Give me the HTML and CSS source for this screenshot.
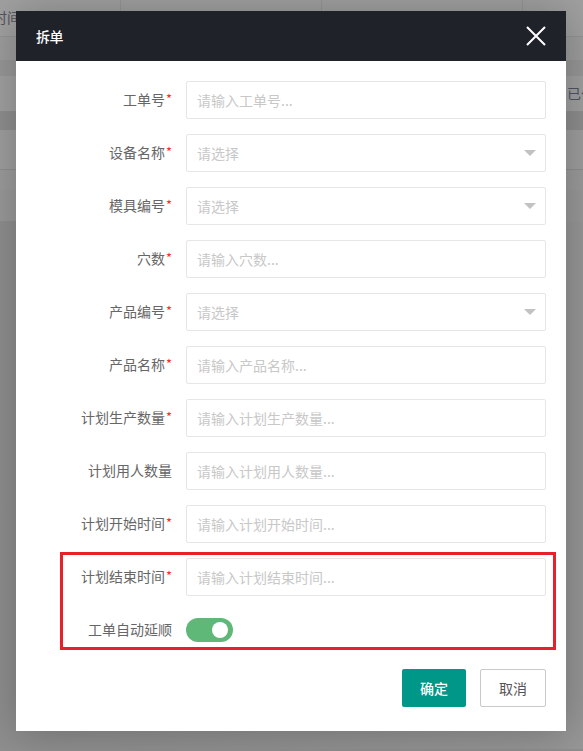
FILE: index.html
```html
<!DOCTYPE html>
<html lang="zh-CN">
<head>
<meta charset="utf-8">
<title>拆单</title>
<link rel="stylesheet" href="styles.css">
</head>
<body>
<div class="page">
  <div class="bg">
    <div class="bg-row r-head">
      <div class="bg-cell c1"><span class="bg-text">时间</span></div>
      <div class="bg-cell c2"></div>
      <div class="bg-cell c3"></div>
      <div class="bg-cell c4"></div>
    </div>
    <div class="bg-row r-a"></div>
    <div class="bg-row r-b"></div>
    <div class="bg-row r-c"><span class="bg-text right">已付</span></div>
    <div class="bg-row r-d"></div>
    <div class="bg-row r-e"></div>
    <div class="bg-row r-f"></div>
    <div class="bg-row r-g"></div>
    <div class="bg-row r-h"></div>
  </div>

  <div class="dialog">
    <div class="dlg-head">
      <span class="dlg-title">拆单</span>
      <svg class="dlg-close" width="20" height="20" viewBox="0 0 20 20"><path d="M1 1 L19 19 M19 1 L1 19" stroke="#ffffff" stroke-width="2" fill="none"/></svg>
    </div>
    <div class="dlg-body">
      <div class="form-row">
        <label class="lbl">工单号<i class="req">*</i></label>
        <div class="field"><input class="inp" placeholder="请输入工单号..."></div>
      </div>
      <div class="form-row">
        <label class="lbl">设备名称<i class="req">*</i></label>
        <div class="field"><input class="inp" placeholder="请选择"><span class="caret"></span></div>
      </div>
      <div class="form-row">
        <label class="lbl">模具编号<i class="req">*</i></label>
        <div class="field"><input class="inp" placeholder="请选择"><span class="caret"></span></div>
      </div>
      <div class="form-row">
        <label class="lbl">穴数<i class="req">*</i></label>
        <div class="field"><input class="inp" placeholder="请输入穴数..."></div>
      </div>
      <div class="form-row">
        <label class="lbl">产品编号<i class="req">*</i></label>
        <div class="field"><input class="inp" placeholder="请选择"><span class="caret"></span></div>
      </div>
      <div class="form-row">
        <label class="lbl">产品名称<i class="req">*</i></label>
        <div class="field"><input class="inp" placeholder="请输入产品名称..."></div>
      </div>
      <div class="form-row">
        <label class="lbl">计划生产数量<i class="req">*</i></label>
        <div class="field"><input class="inp" placeholder="请输入计划生产数量..."></div>
      </div>
      <div class="form-row">
        <label class="lbl">计划用人数量</label>
        <div class="field"><input class="inp" placeholder="请输入计划用人数量..."></div>
      </div>
      <div class="form-row">
        <label class="lbl">计划开始时间<i class="req">*</i></label>
        <div class="field"><input class="inp" placeholder="请输入计划开始时间..."></div>
      </div>
      <div class="form-row">
        <label class="lbl">计划结束时间<i class="req">*</i></label>
        <div class="field"><input class="inp" placeholder="请输入计划结束时间..."></div>
      </div>
      <div class="form-row">
        <label class="lbl">工单自动延顺</label>
        <div class="field field-switch"><span class="switch"><span class="knob"></span></span></div>
      </div>
    </div>
    <div class="dlg-foot">
      <button class="btn btn-primary">确定</button>
      <button class="btn btn-default">取消</button>
    </div>
    <div class="annot"></div>
  </div>
</div>
</body>
</html>
```
FILE: styles.css
```css
* { box-sizing: border-box; }
html, body { margin: 0; padding: 0; }
body {
  font-family: "Noto Sans CJK SC", "Noto Sans", sans-serif;
  font-size: 14px;
  background: #8f8f8f;
}
.page {
  position: relative;
  width: 583px;
  height: 751px;
  overflow: hidden;
}
.bg { display: flex; flex-direction: column; }
.bg-row { position: relative; width: 100%; }
.r-head {
  height: 37px;
  background: #a1a1a1;
  border-bottom: 1px solid #939393;
  display: flex;
}
.bg-cell { height: 100%; border-right: 1px solid #969696; position: relative; }
.c1 { width: 121px; }
.c2 { width: 201px; }
.c3 { width: 201px; }
.c4 { flex: 1; border-right: none; }
.bg-text {
  position: absolute;
  left: -7px;
  top: 7px;
  font-size: 14px;
  line-height: 20px;
  color: #55535e;
  white-space: nowrap;
}
.bg-text.right { left: 567px; top: 7px; color: #4d5566; }
.r-a { height: 23px; background: #9d9d9d; }
.r-b { height: 16px; background: #979797; }
.r-c { height: 37px; background: #a0a0a0; border-bottom: 2px solid #8f8f8f; }
.r-d { height: 17px; background: #8e8e8e; }
.r-e { height: 40px; background: #9e9e9e; border-bottom: 1px solid #8f8f8f; }
.r-f { height: 20px; background: #9b9b9b; }
.r-g { height: 31px; background: #999999; }
.r-h { height: 528px; background: linear-gradient(90deg, #8e8e8e, #929292 60%, #979797); }

.dialog {
  position: absolute;
  left: 16px;
  top: 11px;
  width: 550px;
  height: 720px;
  background: #ffffff;
  box-shadow: 1px 1px 40px rgba(0,0,0,0.25);
}
.dlg-head {
  height: 50px;
  background: #20222a;
  display: flex;
  align-items: center;
  justify-content: space-between;
  padding: 0 20px;
}
.dlg-title {
  color: #ffffff;
  font-size: 14px;
  font-weight: 500;
  letter-spacing: -0.5px;
}
.dlg-close { display: block; }

.dlg-body {
  padding: 20px 20px 0 0;
  display: flex;
  flex-direction: column;
  gap: 15px;
}
.form-row {
  display: grid;
  grid-template-columns: 156px 360px;
  column-gap: 14px;
  height: 38px;
}
.lbl {
  text-align: right;
  line-height: 37px;
  color: #666666;
  font-size: 14px;
  white-space: nowrap;
}
.req {
  font-style: normal;
  color: #ff2b2b;
  font-size: 13px;
  position: relative;
  top: -1px;
  margin-left: 1px;
}
.field { position: relative; height: 38px; }
.inp {
  width: 100%;
  height: 38px;
  border: 1px solid #e6e6e6;
  border-radius: 2px;
  padding: 0 10px;
  font-family: inherit;
  font-size: 14px;
  color: #333;
  outline: none;
  background: #fff;
}
.inp::placeholder { color: #c8c8c8; }
.caret {
  position: absolute;
  right: 10px;
  top: 16px;
  width: 0;
  height: 0;
  border-left: 6px solid transparent;
  border-right: 6px solid transparent;
  border-top: 6px solid #c2c2c2;
}
.field-switch { display: flex; align-items: center; }
.switch {
  position: relative;
  display: block;
  width: 47px;
  height: 24px;
  border-radius: 12px;
  background: #5fb878;
}
.knob {
  position: absolute;
  right: 5px;
  top: 4px;
  width: 16px;
  height: 16px;
  border-radius: 50%;
  background: #ffffff;
}

.dlg-foot {
  display: flex;
  justify-content: flex-end;
  gap: 14px;
  padding: 20px 20px 0 0;
}
.btn {
  height: 38px;
  border-radius: 2px;
  font-family: inherit;
  font-size: 14px;
  padding: 0;
  cursor: pointer;
}
.btn-primary {
  width: 64px;
  background: #009688;
  color: #ffffff;
  border: none;
  font-weight: 500;
}
.btn-default {
  width: 66px;
  background: #ffffff;
  color: #555555;
  border: 1px solid #c9c9c9;
}
.annot {
  position: absolute;
  left: 44px;
  top: 541px;
  width: 496px;
  height: 98px;
  border: 3px solid #e8202a;
  pointer-events: none;
}
```
